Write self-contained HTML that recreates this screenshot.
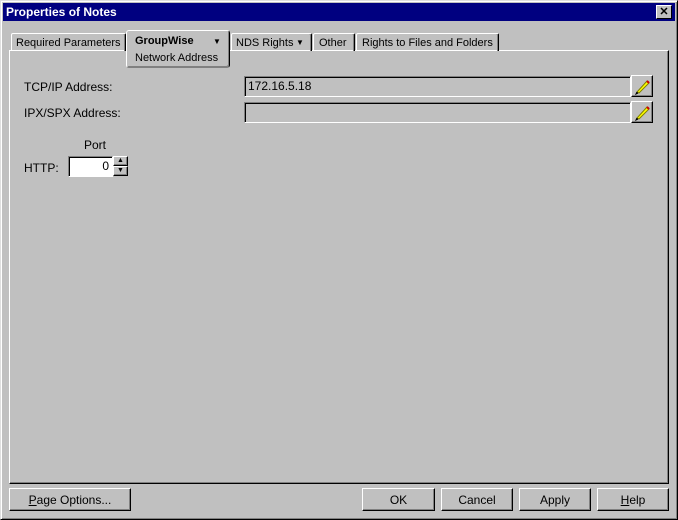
<!DOCTYPE html><html><head><style>
*{box-sizing:border-box}
body{margin:0;width:678px;height:520px;background:#c0c0c0;font-family:"Liberation Sans",sans-serif;font-size:11px;position:relative;overflow:hidden}
.a{position:absolute;white-space:nowrap}
.win{left:0;top:0;width:678px;height:520px;border:1px solid;border-color:#dfdfdf #000 #000 #dfdfdf;box-shadow:inset 1px 1px #fff,inset -1px -1px #808080}
.title{left:3px;top:3px;width:672px;height:18px;background:#000080;color:#fff;font-weight:bold;font-size:12px;padding:2px 3px}
.x{left:656px;top:5px;width:16px;height:14px;background:#c0c0c0;border:1px solid;border-color:#fff #000 #000 #fff;font-size:11px;font-weight:bold;text-align:center;line-height:12px;color:#000}
.tab{top:33px;height:18px;border:1px solid;border-color:#fff #000 transparent #fff;border-bottom:none;padding:3px 5px;border-radius:2px 2px 0 0;box-shadow:inset -1px 0 #808080;overflow:hidden}
.panel{left:9px;top:50px;width:660px;height:434px;border:1px solid;border-color:#fff #000 #000 #fff;box-shadow:inset -1px -1px #808080}
.inp{border:1px solid;border-color:#808080 #fff #fff #808080;box-shadow:inset 1px 1px #000;padding:2px 3px;font-size:12px}
.btn{border:1px solid;border-color:#fff #000 #000 #fff;box-shadow:inset -1px -1px #808080;text-align:center;font-size:12px;padding-top:4px}
</style></head><body>
<div class="a win"></div>
<div class="a title">Properties of Notes</div>
<div class="a x">✕</div>
<div class="a panel"></div>
<div class="a tab" style="left:11px;width:115px;padding:3px 4px">Required Parameters</div>
<div class="a tab" style="left:231px;width:81px;padding:3px 4px">NDS Rights <span style="position:absolute;left:64px;top:4px;font-size:8px">▼</span></div>
<div class="a tab" style="left:313px;width:42px">Other</div>
<div class="a tab" style="left:356px;width:143px">Rights to Files and Folders</div>
<div class="a" style="left:126px;top:30px;width:104px;height:38px;background:#c0c0c0;border:1px solid;border-color:#fff #000 #808080 #fff;border-radius:3px;padding:4px 8px;box-shadow:inset -1px -1px #808080">
<b>GroupWise</b><span style="position:absolute;left:86px;top:6px;font-size:8px">▼</span><div style="margin-top:5px">Network Address</div></div>
<div class="a" style="left:24px;top:80px;font-size:12px">TCP/IP Address:</div>
<div class="a" style="left:24px;top:106px;font-size:12px">IPX/SPX Address:</div>
<div class="a inp" style="left:244px;top:76px;width:387px;height:21px">172.16.5.18</div>
<div class="a inp" style="left:244px;top:102px;width:387px;height:21px"></div>
<div class="a btn" style="left:631px;top:75px;width:22px;height:22px;padding:0"><svg width="20" height="20"><path d="M5 16 L15 5 L17 7 L7 17Z" fill="#ff0" stroke="#808000"/><path d="M15 5l2 2" stroke="#c00" stroke-width="2"/><path d="M5 16l-1 2 2-1" stroke="#000"/></svg></div>
<div class="a btn" style="left:631px;top:101px;width:22px;height:22px;padding:0"><svg width="20" height="20"><path d="M5 16 L15 5 L17 7 L7 17Z" fill="#ff0" stroke="#808000"/><path d="M15 5l2 2" stroke="#c00" stroke-width="2"/><path d="M5 16l-1 2 2-1" stroke="#000"/></svg></div>
<div class="a" style="left:84px;top:138px;font-size:12px">Port</div>
<div class="a" style="left:24px;top:161px;font-size:12px">HTTP:</div>
<div class="a inp" style="left:68px;top:156px;width:45px;height:21px;background:#fff;text-align:right">0</div>
<div class="a btn" style="left:113px;top:156px;width:15px;height:10px;padding:0;font-size:7px;line-height:8px">▲</div>
<div class="a btn" style="left:113px;top:166px;width:15px;height:10px;padding:0;font-size:7px;line-height:8px">▼</div>
<div class="a btn" style="left:9px;top:488px;width:122px;height:23px"><u>P</u>age Options...</div>
<div class="a btn" style="left:362px;top:488px;width:73px;height:23px">OK</div>
<div class="a btn" style="left:441px;top:488px;width:72px;height:23px">Cancel</div>
<div class="a btn" style="left:519px;top:488px;width:72px;height:23px">Apply</div>
<div class="a btn" style="left:597px;top:488px;width:72px;height:23px"><u>H</u>elp</div>
</body></html>
